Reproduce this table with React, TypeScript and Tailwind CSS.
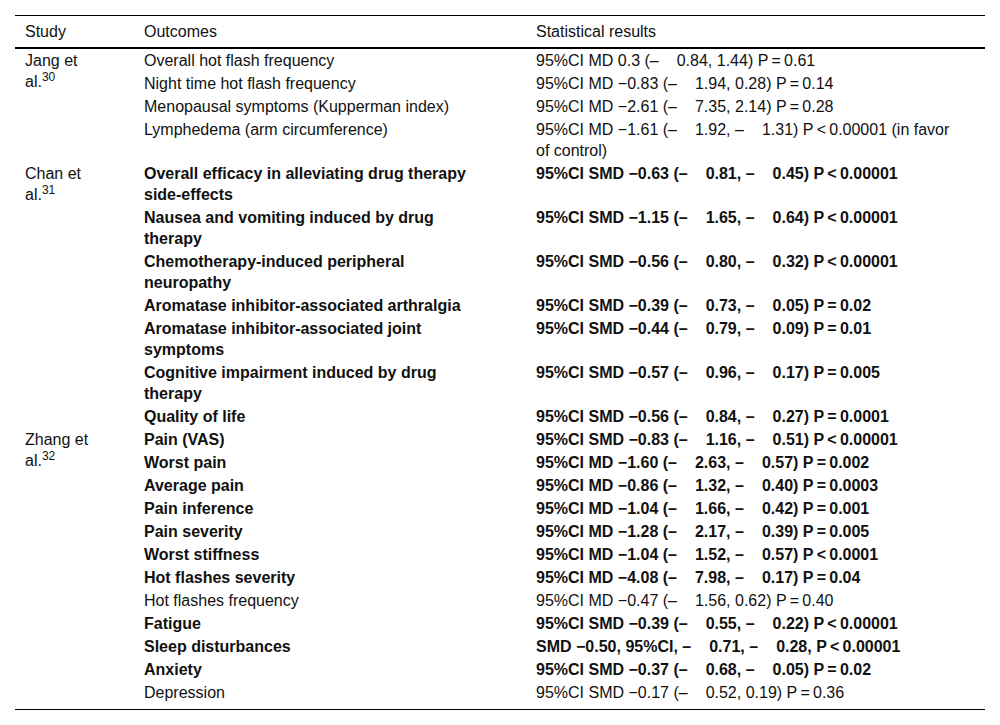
type Row = { outcome: string; result: string; bold?: boolean };
type Group = { study: string; refNo: string; rows: Row[] };

const groups: Group[] = [
  {
    study: "Jang et al.",
    refNo: "30",
    rows: [
      { outcome: "Overall hot flash frequency", result: "95%CI MD 0.3 (–|0.84, 1.44) P = 0.61" },
      { outcome: "Night time hot flash frequency", result: "95%CI MD −0.83 (–|1.94, 0.28) P = 0.14" },
      { outcome: "Menopausal symptoms (Kupperman index)", result: "95%CI MD −2.61 (–|7.35, 2.14) P = 0.28" },
      {
        outcome: "Lymphedema (arm circumference)",
        result: "95%CI MD −1.61 (–|1.92, –|1.31) P < 0.00001 (in favor of control)",
      },
    ],
  },
  {
    study: "Chan et al.",
    refNo: "31",
    rows: [
      { outcome: "Overall efficacy in alleviating drug therapy side-effects", result: "95%CI SMD −0.63 (–|0.81, –|0.45) P < 0.00001", bold: true },
      { outcome: "Nausea and vomiting induced by drug therapy", result: "95%CI SMD −1.15 (–|1.65, –|0.64) P < 0.00001", bold: true },
      { outcome: "Chemotherapy-induced peripheral neuropathy", result: "95%CI SMD −0.56 (–|0.80, –|0.32) P < 0.00001", bold: true },
      { outcome: "Aromatase inhibitor-associated arthralgia", result: "95%CI SMD −0.39 (–|0.73, –|0.05) P = 0.02", bold: true },
      { outcome: "Aromatase inhibitor-associated joint symptoms", result: "95%CI SMD −0.44 (–|0.79, –|0.09) P = 0.01", bold: true },
      { outcome: "Cognitive impairment induced by drug therapy", result: "95%CI SMD −0.57 (–|0.96, –|0.17) P = 0.005", bold: true },
      { outcome: "Quality of life", result: "95%CI SMD −0.56 (–|0.84, –|0.27) P = 0.0001", bold: true },
    ],
  },
  {
    study: "Zhang et al.",
    refNo: "32",
    rows: [
      { outcome: "Pain (VAS)", result: "95%CI SMD −0.83 (–|1.16, –|0.51) P < 0.00001", bold: true },
      { outcome: "Worst pain", result: "95%CI MD −1.60 (–|2.63, –|0.57) P = 0.002", bold: true },
      { outcome: "Average pain", result: "95%CI MD −0.86 (–|1.32, –|0.40) P = 0.0003", bold: true },
      { outcome: "Pain inference", result: "95%CI MD −1.04 (–|1.66, –|0.42) P = 0.001", bold: true },
      { outcome: "Pain severity", result: "95%CI MD −1.28 (–|2.17, –|0.39) P = 0.005", bold: true },
      { outcome: "Worst stiffness", result: "95%CI MD −1.04 (–|1.52, –|0.57) P < 0.0001", bold: true },
      { outcome: "Hot flashes severity", result: "95%CI MD −4.08 (–|7.98, –|0.17) P = 0.04", bold: true },
      { outcome: "Hot flashes frequency", result: "95%CI MD −0.47 (–|1.56, 0.62) P = 0.40" },
      { outcome: "Fatigue", result: "95%CI SMD −0.39 (–|0.55, –|0.22) P < 0.00001", bold: true },
      { outcome: "Sleep disturbances", result: "SMD −0.50, 95%CI, –|0.71, –|0.28, P < 0.00001", bold: true },
      { outcome: "Anxiety", result: "95%CI SMD −0.37 (–|0.68, –|0.05) P = 0.02", bold: true },
      { outcome: "Depression", result: "95%CI SMD −0.17 (–|0.52, 0.19) P = 0.36" },
    ],
  },
];

// thin spaces around = and <, and the odd wide gap after each dash
function Result({ text }: { text: string }) {
  const parts = text.replace(/ ([=<]) /g, "\u2009$1\u2009").split("|");
  return (
    <>
      {parts.map((p, i) => (
        <span key={i}>
          {i > 0 && <span className="inline-block w-[18px]" />}
          {p}
        </span>
      ))}
    </>
  );
}

export default function App() {
  return (
    <div className="min-h-[725px] bg-white pt-[15px] font-['Liberation_Sans',Arial,sans-serif] text-[16px] leading-[21px] text-[#111]">
      <div className="mx-[15px] w-[970px] border-t border-b border-black pb-[5px]">
        <table className="w-full table-fixed border-collapse">
          <thead>
            <tr className="border-b-2 border-black text-left">
              <th className="w-[119px] pl-[10px] py-[5px] font-normal">Study</th>
              <th className="w-[392px] pl-[10px] py-[5px] font-normal">Outcomes</th>
              <th className="pl-[10px] py-[5px] font-normal">Statistical results</th>
            </tr>
          </thead>
          <tbody>
            {groups.map((g) =>
              g.rows.map((r, i) => (
                <tr key={g.study + i} className={r.bold ? "font-bold" : ""}>
                  {i === 0 && (
                    <td rowSpan={g.rows.length} className="pl-[10px] pr-[40px] py-px align-top font-normal">
                      {g.study}
                      <sup className="text-[12px] leading-none">{g.refNo}</sup>
                    </td>
                  )}
                  <td className="pl-[10px] pr-[52px] py-px align-top">{r.outcome}</td>
                  <td className="pl-[10px] pr-[30px] py-px align-top">
                    <Result text={r.result} />
                  </td>
                </tr>
              ))
            )}
          </tbody>
        </table>
      </div>
    </div>
  );
}
